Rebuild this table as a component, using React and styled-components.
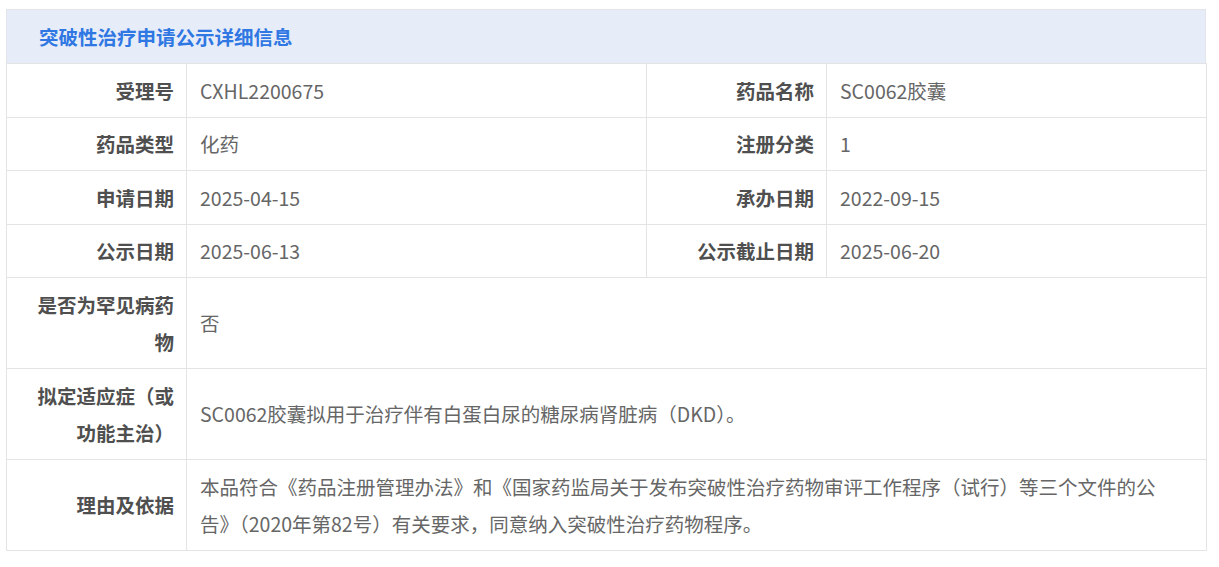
import styled, { createGlobalStyle } from "styled-components";

const GlobalStyle = createGlobalStyle`
  body {
    margin: 0;
    background: #fff;
    font-family: "Noto Sans CJK SC", "Noto Sans", sans-serif;
  }
`;

const Card = styled.div`
  width: 1200px;
  margin: 9px 0 0 6px;
`;

const Header = styled.div`
  height: 53px;
  display: flex;
  align-items: center;
  padding-left: 32px;
  background: #e6ecf8;
  border: 1px solid #e3e5ea;
  border-bottom: none;
  color: #2f77e3;
  font-size: 19.5px;
  font-weight: 700;
`;

const Table = styled.table`
  width: 100%;
  border-collapse: collapse;
  table-layout: fixed;
  font-size: 19.5px;
  line-height: 37.5px;
`;

const Col = styled.col`
  width: ${(p) => p.$w}px;
`;

const Label = styled.th`
  border: 1px solid #e4e4e4;
  padding: 7.5px 12px 7.5px 16px;
  text-align: right;
  vertical-align: middle;
  color: #4f4f4f;
  font-weight: 700;
`;

const Value = styled.td`
  border: 1px solid #e4e4e4;
  padding: 7.5px 45px 7.5px 13px;
  text-align: left;
  vertical-align: middle;
  color: #666;
  font-weight: 400;
`;

const rows = [
  [["受理号", "CXHL2200675"], ["药品名称", "SC0062胶囊"]],
  [["药品类型", "化药"], ["注册分类", "1"]],
  [["申请日期", "2025-04-15"], ["承办日期", "2022-09-15"]],
  [["公示日期", "2025-06-13"], ["公示截止日期", "2025-06-20"]],
];

const wide = [
  ["是否为罕见病药物", "否"],
  ["拟定适应症（或功能主治）", "SC0062胶囊拟用于治疗伴有白蛋白尿的糖尿病肾脏病（DKD）。"],
  [
    "理由及依据",
    "本品符合《药品注册管理办法》和《国家药监局关于发布突破性治疗药物审评工作程序（试行）等三个文件的公告》（2020年第82号）有关要求，同意纳入突破性治疗药物程序。",
  ],
];

export default function App() {
  return (
    <>
      <GlobalStyle />
      <Card>
        <Header>突破性治疗申请公示详细信息</Header>
        <Table>
          <colgroup>
            <Col $w={180} />
            <Col $w={460} />
            <Col $w={180} />
            <Col $w={380} />
          </colgroup>
          <tbody>
            {rows.map((row, i) => (
              <tr key={i}>
                {row.map(([k, v]) => [
                  <Label key={k}>{k}</Label>,
                  <Value key={k + "v"}>{v}</Value>,
                ])}
              </tr>
            ))}
            {wide.map(([k, v]) => (
              <tr key={k}>
                <Label>{k}</Label>
                <Value colSpan={3}>{v}</Value>
              </tr>
            ))}
          </tbody>
        </Table>
      </Card>
    </>
  );
}
